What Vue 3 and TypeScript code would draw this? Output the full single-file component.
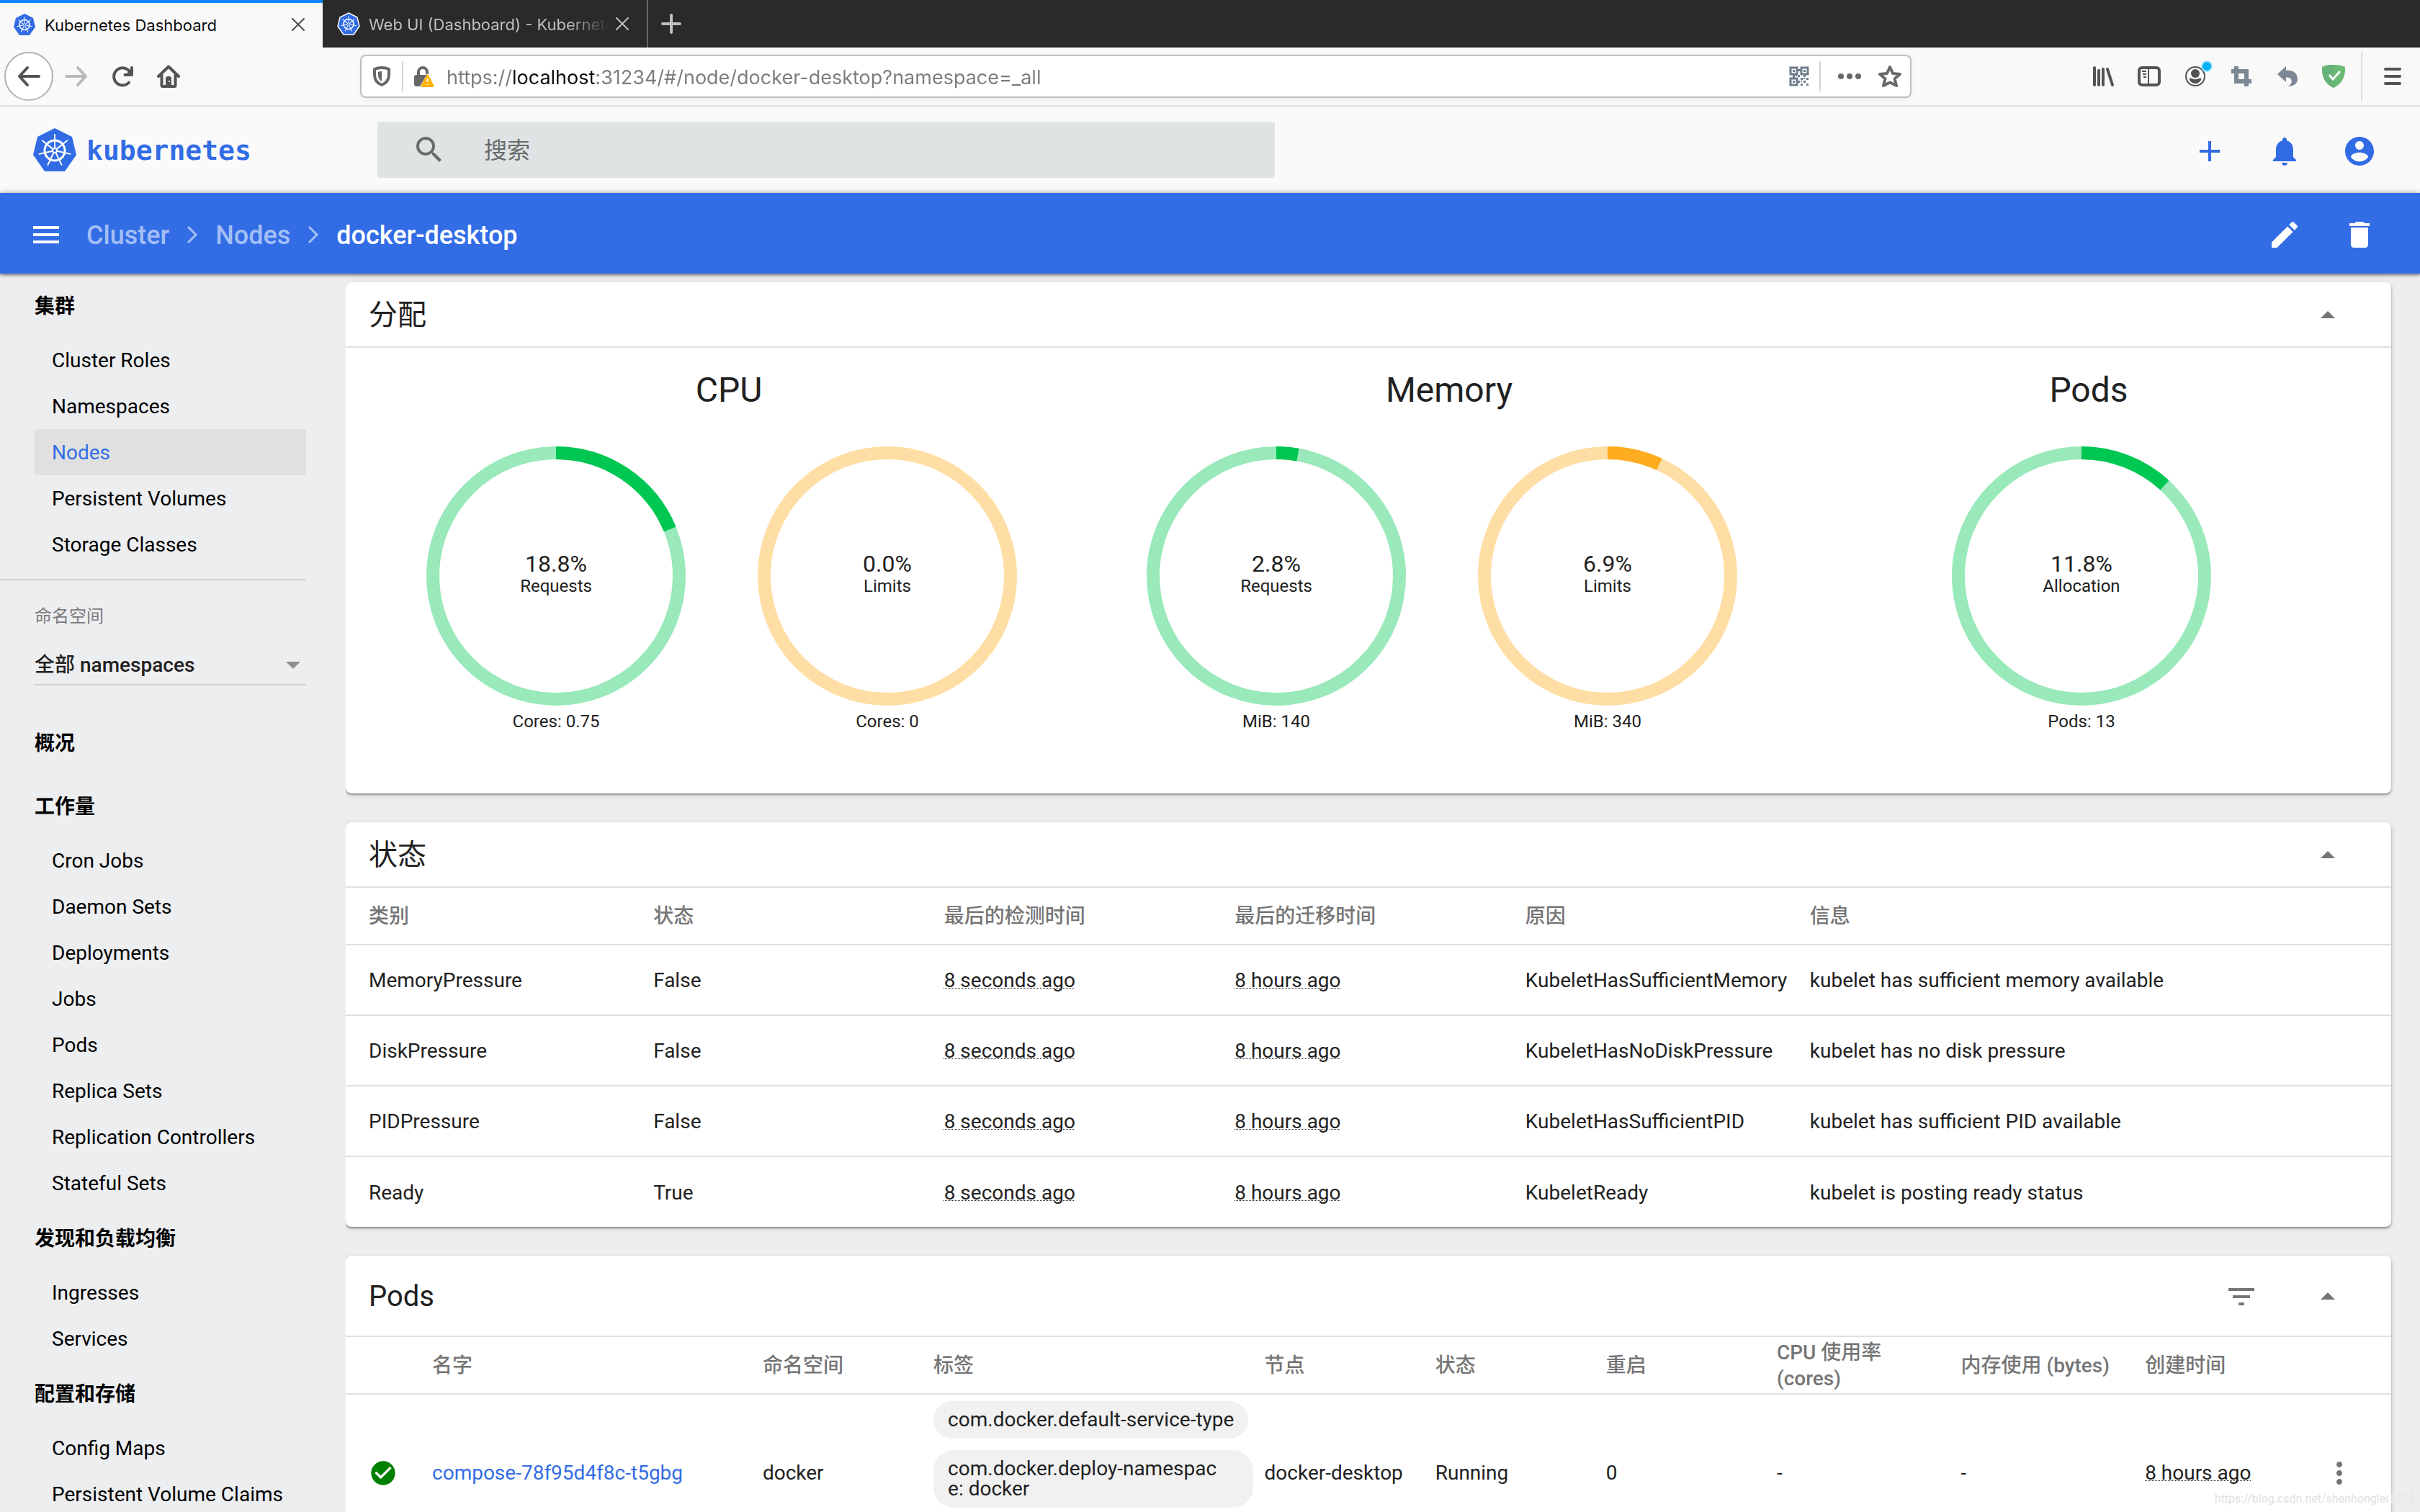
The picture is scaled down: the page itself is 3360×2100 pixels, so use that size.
<script setup lang="ts">
import { ref } from 'vue'

interface NavGroup { title: string; items: string[] }
interface Gauge { percent: number; value: string; label: string; total: string; tone: 'green' | 'orange' }
interface GaugeGroup { title: string; gauges: Gauge[] }

const url = ref('https://localhost:31234/#/node/docker-desktop?namespace=_all')
const search = ref('')
const namespace = ref('all')

const icons = {
  search: 'M15.5 14h-.79l-.28-.27A6.47 6.47 0 0 0 16 9.5 6.5 6.5 0 1 0 9.5 16c1.61 0 3.09-.59 4.23-1.57l.27.28v.79l5 4.99L20.49 19l-4.99-5zm-6 0C7.01 14 5 11.99 5 9.5S7.01 5 9.5 5 14 7.01 14 9.5 11.99 14 9.5 14z',
  add: 'M19 13h-6v6h-2v-6H5v-2h6V5h2v6h6v2z',
  bell: 'M12 22c1.1 0 2-.9 2-2h-4c0 1.1.89 2 2 2zm6-6v-5c0-3.07-1.64-5.64-4.5-6.32V4c0-.83-.67-1.5-1.5-1.5s-1.5.67-1.5 1.5v.68C7.63 5.36 6 7.92 6 11v5l-2 2v1h16v-1l-2-2z',
  account: 'M12 2C6.48 2 2 6.48 2 12s4.48 10 10 10 10-4.48 10-10S17.52 2 12 2zm0 3c1.66 0 3 1.34 3 3s-1.34 3-3 3-3-1.34-3-3 1.34-3 3-3zm0 14.2c-2.5 0-4.71-1.28-6-3.22.03-1.99 4-3.08 6-3.08 1.99 0 5.97 1.09 6 3.08-1.29 1.94-3.5 3.22-6 3.22z',
  menu: 'M3 18h18v-2H3v2zm0-5h18v-2H3v2zm0-7v2h18V6H3z',
  edit: 'M3 17.25V21h3.75L17.81 9.94l-3.75-3.75L3 17.25zM20.71 7.04c.39-.39.39-1.02 0-1.41l-2.34-2.34c-.39-.39-1.02-.39-1.41 0l-1.83 1.83 3.75 3.75 1.83-1.83z',
  trash: 'M6 19c0 1.1.9 2 2 2h8c1.1 0 2-.9 2-2V7H6v12zM19 4h-3.5l-1-1h-5l-1 1H5v2h14V4z',
  up: 'M7 14l5-5 5 5z',
  filter: 'M10 18h4v-2h-4v2zM3 6v2h18V6H3zm3 7h12v-2H6v2z',
  more: 'M12 8c1.1 0 2-.9 2-2s-.9-2-2-2-2 .9-2 2 .9 2 2 2zm0 2c-1.1 0-2 .9-2 2s.9 2 2 2 2-.9 2-2-.9-2-2-2zm0 6c-1.1 0-2 .9-2 2s.9 2 2 2 2-.9 2-2-.9-2-2-2z',
  check: 'M12 2C6.48 2 2 6.48 2 12s4.48 10 10 10 10-4.48 10-10S17.52 2 12 2zm-2 15l-5-5 1.41-1.41L10 14.17l7.59-7.59L19 8l-9 9z',
}

const tabs = [
  { title: 'Kubernetes Dashboard', active: true },
  { title: 'Web UI (Dashboard) - Kubernetes', active: false },
]

const spokes = Array.from({ length: 7 }, (_, i) => (i * 360) / 7)

const clusterItems = ['Cluster Roles', 'Namespaces', 'Nodes', 'Persistent Volumes', 'Storage Classes']
const groups: NavGroup[] = [
  { title: '概况', items: [] },
  { title: '工作量', items: ['Cron Jobs', 'Daemon Sets', 'Deployments', 'Jobs', 'Pods', 'Replica Sets', 'Replication Controllers', 'Stateful Sets'] },
  { title: '发现和负载均衡', items: ['Ingresses', 'Services'] },
  { title: '配置和存储', items: ['Config Maps', 'Persistent Volume Claims'] },
]

const allocation: GaugeGroup[] = [
  {
    title: 'CPU',
    gauges: [
      { percent: 18.8, value: '18.8%', label: 'Requests', total: 'Cores: 0.75', tone: 'green' },
      { percent: 0, value: '0.0%', label: 'Limits', total: 'Cores: 0', tone: 'orange' },
    ],
  },
  {
    title: 'Memory',
    gauges: [
      { percent: 2.8, value: '2.8%', label: 'Requests', total: 'MiB: 140', tone: 'green' },
      { percent: 6.9, value: '6.9%', label: 'Limits', total: 'MiB: 340', tone: 'orange' },
    ],
  },
  {
    title: 'Pods',
    gauges: [{ percent: 11.8, value: '11.8%', label: 'Allocation', total: 'Pods: 13', tone: 'green' }],
  },
]

const conditionHeads = ['类别', '状态', '最后的检测时间', '最后的迁移时间', '原因', '信息']
const conditions = [
  { type: 'MemoryPressure', status: 'False', reason: 'KubeletHasSufficientMemory', message: 'kubelet has sufficient memory available' },
  { type: 'DiskPressure', status: 'False', reason: 'KubeletHasNoDiskPressure', message: 'kubelet has no disk pressure' },
  { type: 'PIDPressure', status: 'False', reason: 'KubeletHasSufficientPID', message: 'kubelet has sufficient PID available' },
  { type: 'Ready', status: 'True', reason: 'KubeletReady', message: 'kubelet is posting ready status' },
]

const podHeads = ['', '名字', '命名空间', '标签', '节点', '状态', '重启', 'CPU 使用率 (cores)', '内存使用 (bytes)', '创建时间', '']
const podLabels = ['com.docker.default-service-type', 'com.docker.deploy-namespac\ne: docker']
</script>

<template>
  <div class="window">
    <header class="tabbar">
      <div v-for="tab in tabs" :key="tab.title" class="tab" :class="{ active: tab.active }">
        <svg class="favicon" viewBox="-2 -2 64 64" aria-hidden="true">
          <path class="hept" d="M30 0 54 12 60 37 44 60H16L0 37 6 12z" />
          <g class="wheel bold">
            <circle cx="30" cy="31" r="14" />
            <path v-for="a in spokes" :key="a" d="M30 28V10" :transform="`rotate(${a} 30 31)`" />
          </g>
        </svg>
        <span class="tab-title">{{ tab.title }}</span>
        <button class="tab-close" aria-label="Close tab">
          <svg viewBox="0 0 20 20"><path d="M2 2 18 18M18 2 2 18" /></svg>
        </button>
      </div>
      <button class="tab-new" aria-label="New tab">
        <svg viewBox="0 0 32 32"><path d="M16 4V28M4 16H28" /></svg>
      </button>
    </header>

    <div class="toolbar">
      <button class="tool back" aria-label="Back">
        <svg viewBox="0 0 32 32"><path class="ln" d="M30 16H4M14 4 3 16 14 28" /></svg>
      </button>
      <button class="tool forward" aria-label="Forward">
        <svg viewBox="0 0 32 32"><path class="ln" d="M2 16H28M18 4 29 16 18 28" /></svg>
      </button>
      <button class="tool" aria-label="Reload">
        <svg viewBox="0 0 32 32">
          <path class="ln" d="M25 24.500A12 12 0 1 1 26 9.500M29 4V14H19.500" />
          <path d="M29 5V14H20z" />
        </svg>
      </button>
      <button class="tool" aria-label="Home">
        <svg viewBox="0 0 32 32">
          <path class="ln" d="M2 16 16 2.500 30 16M6.500 14V28.500Q6.500 30 8 30H24Q25.500 30 25.500 28.500V14" />
          <path fill-rule="evenodd" d="M12 30V19Q12 16 15 16H17Q20 16 20 19V30zM16 22V24H18V22z" />
        </svg>
      </button>

      <div class="urlbar">
        <svg class="u-icon" viewBox="0 0 28 28" aria-hidden="true">
          <path class="ln" d="M14 2Q20 2 24 4V12Q24 22 14 26Q4 22 4 12V4Q8 2 14 2z" />
          <path d="M14 7V21Q9 18 9 12V8Q11 7 14 7z" />
        </svg>
        <span class="u-sep" />
        <svg class="u-lock" viewBox="0 0 30 32" aria-hidden="true">
          <path class="ln" d="M7 16V10A6 6 0 0 1 19 10V12" />
          <rect x="1" y="14" width="20" height="16" rx="3" />
          <path class="halo" d="M19.500 12 31 32H8z" />
          <path class="warn" d="M19.500 15 27 29.500H12z" />
          <path class="bang" d="M19.500 19V24M19.500 27V28" />
        </svg>
        <input v-model="url" class="u-input" aria-label="Address" spellcheck="false" />
        <svg class="u-qr" viewBox="0 0 28 28" aria-hidden="true">
          <path class="qr" d="M2 2H11V11H2zM17 2H26V11H17zM2 17H11V26H2z" />
          <path d="M5 5H8V8H5zM20 5H23V8H20zM5 20H8V23H5zM12 4H16V7H12zM5 12H8V16H5zM20 12H23V15H20zM12 12H15V15H12zM16 16H19V19H16zM24 16H27V19H24zM12 20H15V23H12zM20 20H23V23H20zM16 24H19V27H16zM24 24H27V27H24zM20 16H22V18H20zM9 12H11V14H9zM16 20H18V22H16z" />
        </svg>
        <span class="u-sep" />
        <button class="u-btn" aria-label="Page actions">
          <svg viewBox="0 0 32 32"><circle cx="4" cy="16" r="4" /><circle cx="16" cy="16" r="4" /><circle cx="28" cy="16" r="4" /></svg>
        </button>
        <button class="u-btn" aria-label="Bookmark">
          <svg viewBox="0 0 32 32"><path class="ln" d="M16 3 20 12 30 13 22.500 19.500 25 29 16 24.500 7 29 9.500 19.500 2 13 12 12z" /></svg>
        </button>
      </div>

      <button class="tool" aria-label="Library">
        <svg viewBox="0 0 32 32"><path class="ln" d="M4 4V28M10 8V28M16 6V28M22 6 29 28" /></svg>
      </button>
      <button class="tool" aria-label="Sidebars">
        <svg viewBox="0 0 32 32">
          <rect class="ln" x="2" y="4" width="28" height="24" rx="4" />
          <path class="thin" d="M15 4V28M6 9H12M7 13H12M8 17H12" />
        </svg>
      </button>
      <button class="tool account" aria-label="Account">
        <svg viewBox="0 0 32 32">
          <circle class="thin" cx="16" cy="16" r="13" />
          <circle cx="16" cy="12" r="6" />
          <path d="M8 21Q7 18 10 18.500Q16 22 22 18.500Q25 18 24 21Q21 26 16 26Q11 26 8 21z" />
        </svg>
        <i class="badge" />
      </button>
      <button class="tool slate" aria-label="Screenshot">
        <svg viewBox="0 0 32 32"><path fill-rule="evenodd" d="M6 2H12V6H26V20H30V26H26V30H20V26H6V12H2V6H6zM12 12V20H20V12z" /></svg>
      </button>
      <button class="tool slate" aria-label="Undo close tab">
        <svg viewBox="0 0 32 32"><path d="M14 2V8C24 7 30 12 30 20C30 26 25 30 16 30C23 28 25 17 14 17.500V24L2 13z" /></svg>
      </button>
      <button class="tool" aria-label="Ad blocker">
        <svg viewBox="0 0 32 32">
          <path class="shield" d="M16 0Q26 0 32 3Q33 24 16 32Q-1 24 0 3Q6 0 16 0z" />
          <path class="shield-dark" d="M16 0V32Q-1 24 0 3Q6 0 16 0z" />
          <path class="tick" d="M10 14 15 20 25 9" />
        </svg>
      </button>
      <span class="tool-sep" />
      <button class="tool app-menu" aria-label="Open menu">
        <svg viewBox="0 0 32 32"><path class="ln" d="M6 6H26M6 16H26M6 26H26" /></svg>
      </button>
    </div>

    <header class="brand-bar">
      <a class="brand" href="#/">
        <svg class="logo" viewBox="0 0 60 60" aria-hidden="true">
          <path class="hept" d="M30 0 54 12 60 37 44 60H16L0 37 6 12z" />
          <g class="wheel">
            <circle cx="30" cy="31" r="14" />
            <path v-for="a in spokes" :key="a" d="M30 28V9" :transform="`rotate(${a} 30 31)`" />
          </g>
          <circle class="hub" cx="30" cy="31" r="4" />
          <circle class="hub-dot" cx="30" cy="31" r="2" />
        </svg>
        <span>kubernetes</span>
      </a>
      <label class="search">
        <svg class="mi" viewBox="0 0 24 24" aria-hidden="true"><path :d="icons.search" /></svg>
        <input v-model="search" placeholder="搜索" aria-label="搜索" />
      </label>
      <div class="actions">
        <button aria-label="Create"><svg class="mi" viewBox="0 0 24 24"><path :d="icons.add" /></svg></button>
        <button aria-label="Notifications"><svg class="mi" viewBox="0 0 24 24"><path :d="icons.bell" /></svg></button>
        <button aria-label="User"><svg class="mi" viewBox="0 0 24 24"><path :d="icons.account" /></svg></button>
      </div>
    </header>

    <div class="action-bar">
      <button aria-label="Toggle navigation"><svg class="mi" viewBox="0 0 24 24"><path :d="icons.menu" /></svg></button>
      <nav class="crumbs" aria-label="Breadcrumb">
        <a href="#/cluster">Cluster</a>
        <svg viewBox="0 0 16 26" aria-hidden="true"><path d="M2 2 13 13 2 24" /></svg>
        <a href="#/node">Nodes</a>
        <svg viewBox="0 0 16 26" aria-hidden="true"><path d="M2 2 13 13 2 24" /></svg>
        <span>docker-desktop</span>
      </nav>
      <div class="actions">
        <button aria-label="Edit"><svg class="mi" viewBox="0 0 24 24"><path :d="icons.edit" /></svg></button>
        <button aria-label="Delete"><svg class="mi" viewBox="0 0 24 24"><path :d="icons.trash" /></svg></button>
      </div>
    </div>

    <div class="body">
      <nav class="sidebar">
        <a class="nav-head" href="#/cluster">集群</a>
        <a v-for="item in clusterItems" :key="item" href="#/" class="nav-item" :class="{ current: item === 'Nodes' }">{{ item }}</a>
        <div class="ns">
          <label for="ns">命名空间</label>
          <div class="ns-field">
            <select id="ns" v-model="namespace">
              <option value="all">全部 namespaces</option>
            </select>
            <svg viewBox="0 0 20 10" aria-hidden="true"><path d="M0 0H20L10 10z" /></svg>
          </div>
        </div>
        <template v-for="group in groups" :key="group.title">
          <a class="nav-head" href="#/">{{ group.title }}</a>
          <a v-for="item in group.items" :key="item" href="#/" class="nav-item">{{ item }}</a>
        </template>
      </nav>

      <main class="content">
        <section class="card">
          <div class="card-head">
            <h2>分配</h2>
            <button aria-label="Collapse"><svg class="mi" viewBox="0 0 24 24"><path :d="icons.up" /></svg></button>
          </div>
          <div class="allocation">
            <div v-for="group in allocation" :key="group.title" class="alloc">
              <h3>{{ group.title }}</h3>
              <div class="gauges">
                <svg v-for="g in group.gauges" :key="g.label" class="gauge" :class="g.tone" viewBox="0 0 360 400">
                  <circle class="track" cx="180" cy="180" r="171" />
                  <circle
                    v-if="g.percent > 0"
                    class="arc"
                    cx="180"
                    cy="180"
                    r="171"
                    pathLength="100"
                    :stroke-dasharray="`${g.percent} 100`"
                    transform="rotate(-90 180 180)"
                  />
                  <text class="value" x="180" y="174">{{ g.value }}</text>
                  <text x="180" y="202">{{ g.label }}</text>
                  <text x="180" y="390">{{ g.total }}</text>
                </svg>
              </div>
            </div>
          </div>
        </section>

        <section class="card">
          <div class="card-head">
            <h2>状态</h2>
            <button aria-label="Collapse"><svg class="mi" viewBox="0 0 24 24"><path :d="icons.up" /></svg></button>
          </div>
          <table class="conditions">
            <thead>
              <tr><th v-for="h in conditionHeads" :key="h">{{ h }}</th></tr>
            </thead>
            <tbody>
              <tr v-for="c in conditions" :key="c.type">
                <td>{{ c.type }}</td>
                <td>{{ c.status }}</td>
                <td><span class="ago">8 seconds ago</span></td>
                <td><span class="ago">8 hours ago</span></td>
                <td>{{ c.reason }}</td>
                <td>{{ c.message }}</td>
              </tr>
            </tbody>
          </table>
        </section>

        <section class="card">
          <div class="card-head tall">
            <h2>Pods</h2>
            <button class="filter" aria-label="Filter"><svg class="mi" viewBox="0 0 24 24"><path :d="icons.filter" /></svg></button>
            <button aria-label="Collapse"><svg class="mi" viewBox="0 0 24 24"><path :d="icons.up" /></svg></button>
          </div>
          <table class="pods">
            <thead>
              <tr><th v-for="(h, i) in podHeads" :key="i">{{ h }}</th></tr>
            </thead>
            <tbody>
              <tr>
                <td><svg class="ok" viewBox="0 0 24 24" role="img" aria-label="Running"><path :d="icons.check" /></svg></td>
                <td><a href="#/pod">compose-78f95d4f8c-t5gbg</a></td>
                <td>docker</td>
                <td>
                  <div class="chips">
                    <span v-for="l in podLabels" :key="l" class="chip">{{ l }}</span>
                  </div>
                </td>
                <td>docker-desktop</td>
                <td>Running</td>
                <td>0</td>
                <td>-</td>
                <td>-</td>
                <td><span class="ago">8 hours ago</span></td>
                <td><button aria-label="More"><svg class="mi" viewBox="0 0 24 24"><path :d="icons.more" /></svg></button></td>
              </tr>
            </tbody>
          </table>
        </section>
      </main>
    </div>

    <div class="watermark">https://blog.csdn.net/shenhonglei1234</div>
  </div>
</template>

<style>
html,
body {
  margin: 0;
}
</style>

<style scoped>
.window {
  position: relative;
  display: flex;
  flex-direction: column;
  height: 100vh;
  overflow: hidden;
  background: #edeef0;
  color: #212121;
  font: 400 28px/36px Roboto, 'Noto Sans CJK SC', sans-serif;
}
.window * {
  box-sizing: border-box;
}
button {
  display: flex;
  align-items: center;
  justify-content: center;
  padding: 0;
  border: 0;
  background: none;
  color: inherit;
  font: inherit;
}
a {
  color: inherit;
  text-decoration: none;
}
svg {
  display: block;
  flex: none;
  fill: currentColor;
}
.mi {
  width: 48px;
  height: 48px;
}
.ln {
  fill: none;
  stroke: currentColor;
  stroke-width: 4;
  stroke-linecap: round;
  stroke-linejoin: round;
}
.thin {
  fill: none;
  stroke: currentColor;
  stroke-width: 2;
}
.hept {
  fill: #326ce5;
}
.wheel {
  fill: none;
  stroke: #fff;
  stroke-width: 3;
  stroke-linecap: round;
}
.wheel path {
  stroke-width: 2;
}
.hub {
  fill: #fff;
}
.hub-dot {
  fill: #326ce5;
}

/* Browser tabs */
.tabbar {
  display: flex;
  flex: none;
  height: 66px;
  background: #2a2a2a;
  font: 400 22px/28px Inter, sans-serif;
}
.tab {
  display: flex;
  align-items: center;
  width: 452px;
  padding: 0 24px 0 20px;
  border-right: 2px solid #666;
  color: #bfbfbf;
}
.tab.active {
  width: 448px;
  padding-left: 18px;
  border-top: 4px solid #0a84ff;
  border-right: 0;
  background: #f9f9fa;
  color: #0c0c0d;
}
.tab.active > * {
  margin-top: -2px;
}
.favicon {
  width: 32px;
  height: 32px;
}
.tab:not(.active) .hept {
  stroke: #fff;
  stroke-width: 3;
}
.tab-title {
  flex: 1;
  min-width: 0;
  margin: 0 8px 0 12px;
  padding-top: 2px;
  overflow: hidden;
  white-space: nowrap;
}
.tab:not(.active) .tab-title {
  mask-image: linear-gradient(to left, transparent, #000 60px);
}
.tab-close svg {
  width: 20px;
  height: 20px;
  fill: none;
  stroke: currentColor;
  stroke-width: 2;
  stroke-linecap: round;
}
.tab.active .tab-close {
  color: #4c4c4e;
}
.tab-new {
  width: 64px;
  color: #bfbfbf;
}
.tab-new svg {
  width: 32px;
  height: 32px;
  fill: none;
  stroke: currentColor;
  stroke-width: 4;
  stroke-linecap: round;
}

/* Browser toolbar */
.toolbar {
  display: flex;
  flex: none;
  align-items: center;
  height: 82px;
  padding: 0 6px;
  border-bottom: 2px solid #e1e1e2;
  background: #f9f9fa;
  color: #535355;
}
.tool {
  flex: none;
  width: 64px;
  height: 64px;
}
.tool svg {
  width: 32px;
  height: 32px;
}
.back {
  width: 68px;
  height: 68px;
  border: 2px solid #b1b1b1;
  border-radius: 50%;
  background: #fff;
}
.forward {
  color: #b9b9ba;
}
.urlbar {
  display: flex;
  flex: 1;
  align-items: center;
  height: 60px;
  margin: 0 234px;
  padding: 0 12px 0 14px;
  border: 2px solid #bebebf;
  border-radius: 8px;
  background: #fff;
  box-shadow: 0 2px 8px rgba(0, 0, 0, 0.05);
  color: #686868;
}
.u-icon,
.u-qr {
  width: 28px;
  height: 28px;
}
.u-sep {
  width: 2px;
  height: 42px;
  margin: 0 14px;
  background: #d4d4d5;
}
.u-lock {
  width: 30px;
  height: 32px;
}
.halo {
  fill: #fff;
}
.warn {
  fill: #ffb300;
  stroke: #ffb300;
  stroke-width: 3;
  stroke-linejoin: round;
}
.bang {
  stroke: #fff;
  stroke-width: 2;
}
.u-input {
  flex: 1;
  min-width: 0;
  height: 48px;
  margin-left: 16px;
  padding: 2px 0 0;
  border: 0;
  outline: 0;
  background: linear-gradient(to right, #7c7c7d 92px, #0c0c0d 92px, #0c0c0d 206px, #7c7c7d 206px);
  background-clip: text;
  color: transparent;
  font: 400 27px/36px Inter, sans-serif;
}
.u-qr {
  color: #6f7c8c;
}
.qr {
  fill: none;
  stroke: currentColor;
  stroke-width: 3;
}
.u-btn {
  width: 32px;
  margin-left: 24px;
}
.u-sep + .u-btn {
  margin-left: 10px;
}
.u-btn svg {
  width: 32px;
  height: 32px;
}
.account {
  position: relative;
}
.badge {
  position: absolute;
  top: 10px;
  right: 8px;
  width: 16px;
  height: 16px;
  border: 2px solid #a8e6fb;
  border-radius: 50%;
  background: #00b0f5;
}
.slate {
  color: #7d8896;
}
.shield {
  fill: #68bc71;
}
.shield-dark {
  fill: #67b279;
}
.tick {
  fill: none;
  stroke: #fff;
  stroke-width: 3;
}
.tool-sep {
  width: 2px;
  height: 68px;
  margin: 0 10px 0 6px;
  background: #dcdcdd;
}

/* Dashboard header */
.brand-bar {
  display: flex;
  flex: none;
  align-items: center;
  height: 120px;
  padding: 0 60px 0 46px;
  background: #fafafa;
  color: #326ce5;
}
.brand {
  display: flex;
  align-items: center;
  width: 478px;
  gap: 14px;
  font: 700 38px/44px 'DejaVu Sans Mono', monospace;
}
.brand span {
  padding-top: 2px;
}
.logo {
  width: 60px;
  height: 60px;
}
.search {
  display: flex;
  align-items: center;
  width: 1246px;
  height: 78px;
  padding-left: 48px;
  gap: 52px;
  border-radius: 4px;
  background: #dfe3e4;
  color: #686a6b;
}
.search input {
  flex: 1;
  min-width: 0;
  padding: 2px 0 0;
  border: 0;
  outline: 0;
  background: none;
  color: inherit;
  font: 400 32px/44px Roboto, 'Noto Sans CJK SC', sans-serif;
}
.search input::placeholder {
  color: inherit;
  opacity: 1;
}
.actions {
  display: flex;
  gap: 56px;
  margin-left: auto;
  padding-top: 4px;
}
.action-bar {
  position: relative;
  display: flex;
  flex: none;
  align-items: center;
  height: 112px;
  padding: 0 60px 0 40px;
  background: #326de6;
  box-shadow: 0 0 8px rgba(0, 0, 0, 0.3), 0 2px 4px rgba(0, 0, 0, 0.4);
  color: #fff;
}
.action-bar > button {
  padding-top: 4px;
}
.crumbs {
  display: flex;
  align-items: center;
  margin-left: 32px;
  padding-top: 4px;
  gap: 24px;
  font: 500 36px/44px Roboto, sans-serif;
}
.crumbs a,
.crumbs span {
  padding-top: 2px;
}
.crumbs a,
.crumbs svg {
  color: #a3bff5;
}
.crumbs svg {
  width: 16px;
  height: 26px;
  fill: none;
  stroke: currentColor;
  stroke-width: 3;
}

/* Sidebar */
.body {
  display: flex;
  flex: 1;
  min-height: 0;
}
.sidebar {
  display: flex;
  flex: none;
  flex-direction: column;
  width: 480px;
  padding: 0 55px 0 48px;
  overflow: hidden;
  color: #000;
}
.sidebar > * {
  flex: none;
}
.nav-head {
  padding-top: 4px;
  font-weight: 700;
  line-height: 84px;
}
.nav-item {
  padding: 2px 0 0 24px;
  border-radius: 4px;
  line-height: 62px;
}
.nav-item.current {
  background: #e0e0e0;
  color: #326de6;
}
.ns {
  display: flex;
  flex-direction: column;
  height: 183px;
  margin: 16px 0 0 -48px;
  padding: 32px 0 0 48px;
  border-top: 2px solid #d1d2d4;
}
.ns label {
  color: #7b7b7d;
  font-size: 24px;
}
.ns-field {
  display: flex;
  align-items: center;
  height: 58px;
  margin-top: 20px;
  padding: 4px 8px 0 0;
  border-bottom: 2px solid #d1d2d4;
}
.ns-field select {
  flex: 1;
  appearance: none;
  padding: 0;
  border: 0;
  background: none;
  color: #212121;
  font: 500 28px/36px Roboto, 'Noto Sans CJK SC', sans-serif;
}
.ns-field svg {
  width: 20px;
  height: 10px;
  color: #8e8f91;
}

/* Cards */
.content {
  display: flex;
  flex: 1;
  flex-direction: column;
  min-width: 0;
  padding: 12px 40px 0 0;
  gap: 40px;
  overflow: hidden;
}
.card {
  flex: none;
  border-radius: 8px;
  background: #fff;
  box-shadow: 0 2px 2px rgba(0, 0, 0, 0.3), 0 2px 6px rgba(0, 0, 0, 0.2);
}
.card-head {
  display: flex;
  align-items: center;
  height: 91px;
  padding: 3px 64px 0 32px;
  border-bottom: 2px solid #e0e0e0;
}
.card-head.tall {
  height: 113px;
}
.card-head h2 {
  flex: 1;
  margin: 0;
  font: 400 40px/48px Roboto, 'Noto Sans CJK SC', sans-serif;
}
.card-head button {
  color: #757575;
}
.card-head .filter {
  margin-right: 72px;
}
.allocation {
  display: grid;
  grid-template-columns: 125fr 125fr 97fr;
  height: 619px;
  padding: 31px 32px 0;
}
.alloc h3 {
  margin: 0;
  font: 400 48px/56px Roboto, sans-serif;
  text-align: center;
}
.gauges {
  display: flex;
  justify-content: center;
  gap: 100px;
  padding: 50px 20px 0 0;
}
.gauge {
  width: 360px;
  height: 400px;
}
.gauge text {
  fill: #212121;
  font-size: 24px;
  text-anchor: middle;
}
.gauge .value {
  font-size: 32px;
}
.track,
.arc {
  fill: none;
  stroke-width: 18;
}
.green .track {
  stroke: #99e9ba;
}
.green .arc {
  stroke: #00c752;
}
.orange .track {
  stroke: #ffdea5;
}
.orange .arc {
  stroke: #ffad20;
}

/* Tables */
table {
  width: 100%;
  border-spacing: 0;
  table-layout: fixed;
}
th,
td {
  padding: 2px 0 0;
  text-align: left;
  font-weight: 400;
}
th {
  height: 80px;
  border-bottom: 2px solid #e0e0e0;
  color: #757575;
  font-weight: 500;
}
td {
  height: 98px;
  border-bottom: 2px solid #e0e0e0;
  white-space: nowrap;
}
tr > :first-child {
  padding-left: 32px;
}
tbody tr:last-child td {
  height: 97px;
  border-bottom: 0;
}
.ago {
  text-decoration: underline dotted 1px;
}
.conditions th:nth-child(1) {
  width: 15.04%;
}
.conditions th:nth-child(n + 2):nth-child(-n + 4) {
  width: 14.21%;
}
.conditions th:nth-child(5) {
  width: 13.91%;
}
.pods th:nth-child(1) {
  width: 120px;
}
.pods th:nth-child(2) {
  width: 16.16%;
}
.pods th:nth-child(3),
.pods th:nth-child(5),
.pods th:nth-child(6),
.pods th:nth-child(7) {
  width: 8.35%;
}
.pods th:nth-child(4) {
  width: 16.18%;
}
.pods th:nth-child(8),
.pods th:nth-child(9) {
  width: 9%;
}
.pods th:nth-child(8) {
  padding-right: 80px;
}
.pods th:nth-child(11) {
  width: 96px;
}
.pods tbody tr:last-child td {
  height: 216px;
}
.pods a {
  color: #326de6;
}
.ok {
  width: 40px;
  height: 40px;
  color: #008000;
}
.pods button {
  color: #757575;
}
.chips {
  display: flex;
  flex-direction: column;
  align-items: flex-start;
  height: 214px;
  padding: 7px 16px 0 0;
  gap: 16px;
}
.chip {
  padding: 12px 20px;
  border-radius: 28px;
  background: #f1f1f1;
  line-height: 28px;
  white-space: pre;
}
.chip + .chip {
  align-self: stretch;
}

.watermark {
  position: absolute;
  right: 8px;
  bottom: 8px;
  color: #e0e1e3;
  font-size: 16px;
  line-height: 20px;
  text-shadow: 0 0 2px #fff;
}
</style>
